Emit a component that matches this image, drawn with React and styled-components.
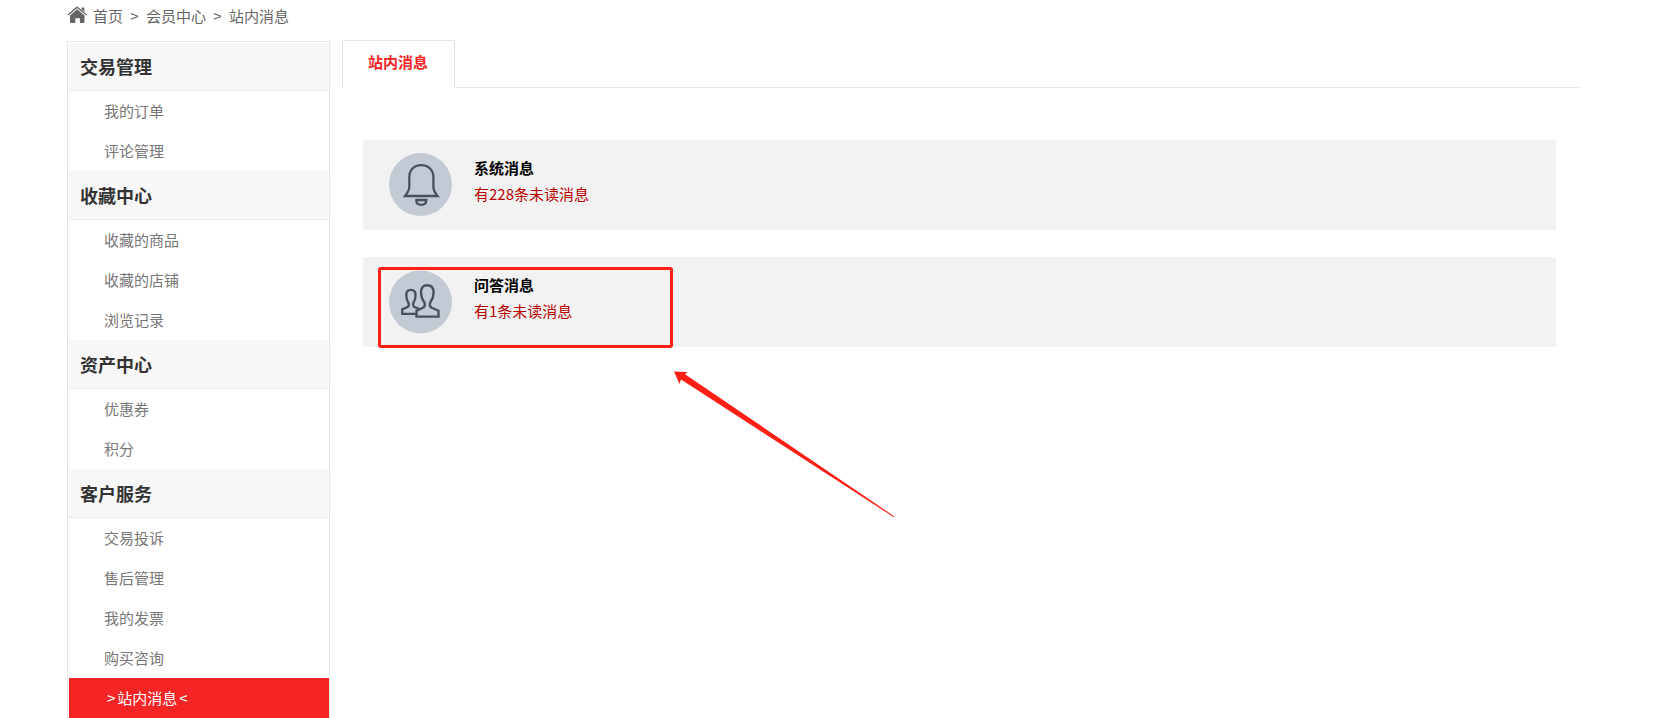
import React from "react";
import styled, { createGlobalStyle } from "styled-components";

const GlobalStyle = createGlobalStyle`
  * { box-sizing: border-box; }
  body {
    margin: 0;
    background: #fff;
    color: #666;
    font: 15px/20px "Noto Sans CJK SC", sans-serif;
  }
  h2, h3, p, ul, ol { margin: 0; padding: 0; list-style: none; }
  a { color: inherit; text-decoration: none; }
`;

const Page = styled.div`
  padding: 0 88px 0 67px;
`;

const Breadcrumb = styled.nav`
  display: flex;
  align-items: center;
  gap: 7px;
  height: 32px;
`;

const Separator = styled.span`
  width: 9px;
  text-align: center;
`;

const HomeLink = styled.a`
  display: flex;
  align-items: center;
  gap: 5px;
`;

const Columns = styled.div`
  display: flex;
  align-items: flex-start;
  gap: 12px;
  padding-top: 8px;
`;

const Sidebar = styled.aside`
  flex: none;
  width: 263px;
  margin-top: 1px;
  padding-left: 1px;
  border: solid #e6e6e6;
  border-width: 1px 1px 0;
`;

const GroupTitle = styled.h2`
  height: 49px;
  padding-left: 11px;
  border-top: 1px solid ${(p) => (p.$first ? "#fff" : "#f7f7f7")};
  border-bottom: 1px solid #ebebeb;
  background: #f7f7f7;
  color: #333;
  font-size: 18px;
  font-weight: 700;
  line-height: 46px;
`;

const MenuLink = styled.a`
  display: flex;
  gap: 2px;
  height: 40px;
  padding-left: ${(p) => (p.$active ? 38 : 35)}px;
  background: ${(p) => (p.$active ? "#f52525" : "transparent")};
  color: ${(p) => (p.$active ? "#fff" : "#777")};
  line-height: 40px;
`;

const Main = styled.main`
  flex: 1;
  min-width: 0;
`;

const Tabs = styled.div`
  display: flex;
  height: 48px;
  border-bottom: 1px solid #e6e6e6;
`;

const Tab = styled.button`
  height: 48px;
  padding: 0 26px 6px 25px;
  border: solid #e6e6e6;
  border-width: 1px 1px 0;
  background: #fff;
  color: #f52525;
  font: inherit;
  font-weight: 700;
  cursor: pointer;
`;

const MessageList = styled.ul`
  display: flex;
  flex-direction: column;
  gap: 27px;
  padding: 52px 24px 0 21px;
`;

const Card = styled.li`
  position: relative;
  display: flex;
  gap: 22px;
  min-height: 90px;
  padding: 13px 26px;
  background: #f2f2f2;
`;

const CardText = styled.a`
  padding-top: 2px;
  line-height: 26px;
`;

const CardTitle = styled.h3`
  color: #000;
  font-size: 15px;
  font-weight: 700;
`;

const Unread = styled.p`
  color: #b90000;
`;

const Highlight = styled.div`
  position: absolute;
  left: 15px;
  top: 10px;
  width: 295px;
  height: 81px;
  border: 3px solid #ff1f14;
  border-radius: 3px;
  pointer-events: none;
`;

const Arrow = styled.svg`
  position: absolute;
  left: 311px;
  top: 114px;
  pointer-events: none;
`;

const HomeIcon = () => (
  <svg width="21" height="20" viewBox="0 0 21 20" aria-hidden="true">
    <path d="M1 9 10.200 1.200 19.500 9" fill="none" stroke="#666" strokeWidth="1.300" />
    <path d="M14.500 1.500h2.800v4.500l-2.800-2.400z" fill="#666" />
    <path d="M10.200 3.300 17.500 9.500V16q0 1-1 1h-3.600v-4.800H8.300V17H4q-1 0-1-1V9.500z" fill="#666" />
  </svg>
);

const BellIcon = () => (
  <svg width="63" height="63" viewBox="0 0 63 63" aria-hidden="true">
    <circle cx="31.500" cy="31.500" r="31.500" fill="#c3cad4" />
    <g fill="none" stroke="#4a515a" strokeWidth="2.300">
      <path d="M16 43C18 40.500 20.300 37.500 20.300 34V24C20.300 17 25 12.200 32.200 12.200S44.400 17 44.400 24V34C44.400 37.500 46.500 40.500 48.500 43Z" />
      <path d="M27.300 47H37.300C37.300 50.300 35.300 51.800 32.300 51.800S27.300 50.300 27.300 47Z" />
    </g>
  </svg>
);

const PeopleIcon = () => (
  <svg width="63" height="64" viewBox="0 0 63 64" aria-hidden="true">
    <circle cx="31.500" cy="32" r="31.500" fill="#c3cad4" />
    <g fill="#c3cad4" stroke="#4a515a" strokeWidth="2.400">
      <path d="M13.300 43.900V39.300L18.600 37C20.300 36 20 33.500 19 32C17.600 30 17.300 27.500 17.300 25C17.300 21.500 19 19.900 21.900 19.900S26.500 21.500 26.500 25C26.500 27.500 26.200 30 24.800 32C24 33.500 23.800 36 25.400 37L31 39.300V43.900Z" />
      <path d="M27.500 46.600V40.700L33.500 38C36.300 36.800 36.600 34 34.800 31.500C33 29 32 26.500 32 22.500C32 17.500 34.200 15.200 38.300 15.200S44.600 17.500 44.600 22.500C44.600 26.500 43.600 29 41.800 31.500C40 34 40.300 36.800 43.100 38L49.500 40.700V46.600Z" />
    </g>
  </svg>
);

const MENU = [
  { title: "交易管理", items: ["我的订单", "评论管理"] },
  { title: "收藏中心", items: ["收藏的商品", "收藏的店铺", "浏览记录"] },
  { title: "资产中心", items: ["优惠券", "积分"] },
  { title: "客户服务", items: ["交易投诉", "售后管理", "我的发票", "购买咨询", "站内消息"] },
];

const ACTIVE = "站内消息";

export default function App() {
  return (
    <>
      <GlobalStyle />
      <Page>
        <Breadcrumb aria-label="breadcrumb">
          <HomeLink href="#home"><HomeIcon />首页</HomeLink>
          <Separator>&gt;</Separator>
          <a href="#member">会员中心</a>
          <Separator>&gt;</Separator>
          <a href="#messages">站内消息</a>
        </Breadcrumb>
        <Columns>
          <Sidebar>
            {MENU.map((group, i) => (
              <section key={group.title}>
                <GroupTitle $first={i === 0}>{group.title}</GroupTitle>
                <ul>
                  {group.items.map((item) => (
                    <li key={item}>
                      <MenuLink href="#menu" $active={item === ACTIVE}>
                        {item === ACTIVE && <span>&gt;</span>}
                        <span>{item}</span>
                        {item === ACTIVE && <span>&lt;</span>}
                      </MenuLink>
                    </li>
                  ))}
                </ul>
              </section>
            ))}
          </Sidebar>
          <Main>
            <Tabs role="tablist">
              <Tab type="button" role="tab" aria-selected="true">站内消息</Tab>
            </Tabs>
            <MessageList>
              <Card>
                <BellIcon />
                <CardText href="#system">
                  <CardTitle>系统消息</CardTitle>
                  <Unread>有228条未读消息</Unread>
                </CardText>
              </Card>
              <Card>
                <PeopleIcon />
                <CardText href="#questions">
                  <CardTitle>问答消息</CardTitle>
                  <Unread>有1条未读消息</Unread>
                </CardText>
                <Highlight />
                <Arrow width="221" height="147" viewBox="0 0 221 147" aria-hidden="true">
                  <path d="M0 .5 13.500 1 11 3.200 220.500 145.500 219.500 146 7 8.500 5.500 13Z" fill="#ff1f14" />
                </Arrow>
              </Card>
            </MessageList>
          </Main>
        </Columns>
      </Page>
    </>
  );
}
